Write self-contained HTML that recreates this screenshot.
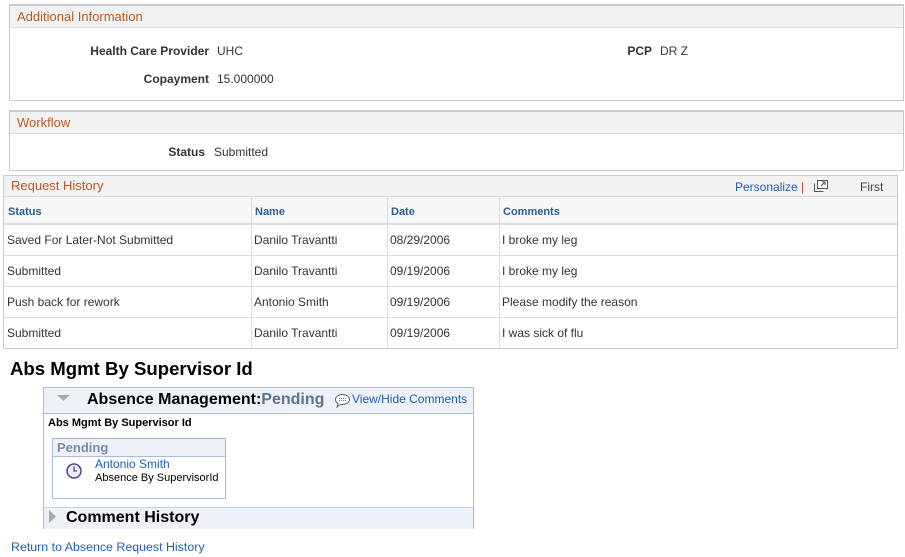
<!DOCTYPE html>
<html><head><meta charset="utf-8"><style>
body{margin:0;width:905px;height:557px;background:#fff;font-family:"Liberation Sans",Arial,sans-serif;font-size:12px;color:#333;position:relative;overflow:hidden}
.a{position:absolute}
.box{position:absolute;border:1px solid #cbcbcb;border-top:2px solid #cbcbcb;background:#fff}
.hd{position:absolute;left:0;right:0;top:0;height:22px;background:#f2f2f2;border-bottom:1px solid #d9d9d9;color:#b65b1f;font-size:13px;line-height:21px;padding-left:7px;box-sizing:border-box}
.lbl{font-weight:bold;color:#333;text-align:right}
.th{position:absolute;top:24px;height:24px;color:#2f5e8f;font-weight:bold;font-size:11px;line-height:24px;padding-left:3px}
.cell{position:absolute;height:31px;line-height:31px;padding-left:3px}
.lnk{color:#1f5fad}
</style></head><body>

<div class="box" style="left:9px;top:4px;width:893px;height:94px">
<div class="hd">Additional Information</div>
<div class="a lbl" style="left:0;width:199px;top:38px">Health Care Provider</div>
<div class="a" style="left:207px;top:38px">UHC</div>
<div class="a lbl" style="left:0;width:199px;top:66px">Copayment</div>
<div class="a" style="left:207px;top:66px">15.000000</div>
<div class="a lbl" style="left:560px;width:82px;top:38px">PCP</div>
<div class="a" style="left:650px;top:38px">DR Z</div>
</div>

<div class="box" style="left:9px;top:110px;width:893px;height:58px">
<div class="hd">Workflow</div>
<div class="a lbl" style="left:0;width:195px;top:33px">Status</div>
<div class="a" style="left:204px;top:33px">Submitted</div>
</div>

<div class="box" style="left:3px;top:175px;width:893px;height:172px;border-top-width:1px">
<div class="hd" style="height:21px;line-height:20px;padding-left:7px">Request History</div>
<div class="a lnk" style="left:731px;top:4px">Personalize <span style="color:#c44">|</span></div>
<svg class="a" style="left:809px;top:3px" width="16" height="14"><rect x="4.5" y="1.5" width="10" height="8" fill="#fff" stroke="#555"/><path d="M1.5 4.5v8h9" fill="none" stroke="#555"/><path d="M8 7l4-4M9 3h3v3" fill="none" stroke="#555"/></svg>
<div class="a" style="left:856px;top:4px;color:#444">First</div>
<div class="a" style="left:0;right:0;top:21px;height:26px;background:#f6f7f7;border-bottom:2px solid #ddd"></div>
<div class="th" style="left:1px">Status</div>
<div class="th" style="left:248px">Name</div>
<div class="th" style="left:384px">Date</div>
<div class="th" style="left:496px">Comments</div>
<div class="a" style="left:247px;top:21px;width:1px;height:151px;background:#ddd"></div>
<div class="a" style="left:383px;top:21px;width:1px;height:151px;background:#ddd"></div>
<div class="a" style="left:495px;top:21px;width:1px;height:151px;background:#ddd"></div>
<div class="a" style="left:0;right:0;top:79px;height:1px;background:#ddd"></div>
<div class="a" style="left:0;right:0;top:110px;height:1px;background:#ddd"></div>
<div class="a" style="left:0;right:0;top:141px;height:1px;background:#ddd"></div>
<div class="cell" style="left:0;top:49px">Saved For Later-Not Submitted</div><div class="cell" style="left:247px;top:49px">Danilo Travantti</div><div class="cell" style="left:383px;top:49px">08/29/2006</div><div class="cell" style="left:495px;top:49px">I broke my leg</div>
<div class="cell" style="left:0;top:80px">Submitted</div><div class="cell" style="left:247px;top:80px">Danilo Travantti</div><div class="cell" style="left:383px;top:80px">09/19/2006</div><div class="cell" style="left:495px;top:80px">I broke my leg</div>
<div class="cell" style="left:0;top:111px">Push back for rework</div><div class="cell" style="left:247px;top:111px">Antonio Smith</div><div class="cell" style="left:383px;top:111px">09/19/2006</div><div class="cell" style="left:495px;top:111px">Please modify the reason</div>
<div class="cell" style="left:0;top:142px">Submitted</div><div class="cell" style="left:247px;top:142px">Danilo Travantti</div><div class="cell" style="left:383px;top:142px">09/19/2006</div><div class="cell" style="left:495px;top:142px">I was sick of flu</div>
</div>

<div class="a" style="left:10px;top:358px;font-size:18.6px;font-weight:bold;color:#000">Abs Mgmt By Supervisor Id</div>

<div class="a" style="left:43px;top:387px;width:429px;height:140px;border:1px solid #a9bcd6;background:#fff">
<div class="a" style="left:0;right:0;top:0;height:25px;background:#eef2f8;border-bottom:1px solid #a9bcd6"></div>
<svg class="a" style="left:13px;top:7px" width="14" height="8"><path d="M0 0h13L6.5 6z" fill="#aaa"/></svg>
<div class="a" style="left:43px;top:3px;font-size:16px;font-weight:bold;color:#000">Absence Management:<span style="color:#5f7391">Pending</span></div>
<svg class="a" style="left:290px;top:5px" width="17" height="16"><path d="M8.5 1.5c4 0 7 2.3 7 5s-3 5-7 5c-.8 0-1.5 0-2.2-.2L3 14l1-3.3C2.5 9.7 1.5 8.2 1.5 6.5c0-2.7 3-5 7-5z" fill="#fff" stroke="#666"/><path d="M5 5.5h7M5 7.5h7" stroke="#5b7fb0" stroke-dasharray="1 1"/></svg>
<div class="a lnk" style="left:308px;top:4px">View/Hide Comments</div>
<div class="a" style="left:4px;top:29px;font-size:11px;font-weight:bold;color:#000">Abs Mgmt By Supervisor Id</div>
<div class="a" style="left:8px;top:50px;width:172px;height:59px;border:1px solid #a9bcd6">
<div class="a" style="left:0;right:0;top:0;height:17px;background:#eef2f8;border-bottom:1px solid #a9bcd6;color:#7a8aa6;font-weight:bold;font-size:13px;line-height:17px;padding-left:4px">Pending</div>
<svg class="a" style="left:12px;top:23px" width="18" height="18"><circle cx="9" cy="9" r="7" fill="#eef" stroke="#4a4a8a" stroke-width="1.5"/><path d="M9 4.5V9h3" fill="none" stroke="#4a4a8a" stroke-width="1.3"/></svg>
<div class="a lnk" style="left:42px;top:18px">Antonio Smith</div>
<div class="a" style="left:42px;top:33px;font-size:11px;color:#000">Absence By SupervisorId</div>
</div>
<div class="a" style="left:0;right:0;top:119px;height:21px;background:#eef2f8;border-top:1px solid #c8d3e2"></div>
<svg class="a" style="left:5px;top:122px" width="8" height="14"><path d="M0 0v13l7-6.5z" fill="#aaa"/></svg>
<div class="a" style="left:22px;top:121px;font-size:16px;font-weight:bold;color:#000">Comment History</div>
</div>

<div class="a lnk" style="left:11px;top:540px;font-size:12.4px">Return to Absence Request History</div>
</body></html>
